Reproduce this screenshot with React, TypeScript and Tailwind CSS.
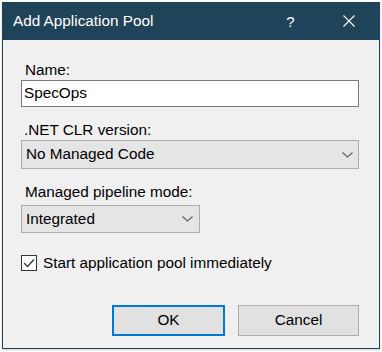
import React from "react";

const Chevron = () => (
  <svg width="11" height="6" viewBox="0 0 11 6" fill="none">
    <path d="M0.5 0.5 L5.5 5 L10.5 0.5" stroke="#606060" strokeWidth="1.1" />
  </svg>
);

const App = () => {
  return (
    <div className="w-[382px] h-[352px] bg-white pt-[2px] pl-[2px] font-['Liberation_Sans',Arial,sans-serif]">
      {/* window */}
      <div className="w-[378px] h-[347px] flex flex-col border-x border-b border-[#1f4359] bg-[#f0f0f0] shadow-[0_1px_2px_rgba(0,0,0,0.2)]">
        {/* title bar */}
        <div className="h-[38px] shrink-0 bg-[#1f4359] flex items-center pl-[10px] pr-[24px] text-white">
          <span className="flex-1 text-[15.3px] leading-none">Add Application Pool</span>
          <span className="text-[15px] leading-none w-[9px] text-center -ml-[2px]">?</span>
          <svg className="ml-[48px]" width="12" height="12" viewBox="0 0 12 12">
            <path d="M0.5 0.5 L11.5 11.5 M11.5 0.5 L0.5 11.5" stroke="#ffffff" strokeWidth="1.1" />
          </svg>
        </div>

        {/* body */}
        <div className="flex flex-col pl-[18px] pr-[20px] text-[15.3px] text-black">
          <label className="mt-[20px] h-[20px] leading-[20px] pl-[4px]">Name:</label>
          <div className="h-[27px] border border-[#7a7a7a] bg-white flex items-center pl-[2px]">
            SpecOps
          </div>

          <label className="mt-[13px] h-[20px] leading-[20px] pl-[3px]">.NET CLR version:</label>
          <div className="h-[29px] border border-[#adadad] bg-[#e5e5e5] flex items-center justify-between pl-[4px] pr-[5px]">
            <span>No Managed Code</span>
            <Chevron />
          </div>

          <label className="mt-[13px] h-[20px] leading-[20px] pl-[4px]">Managed pipeline mode:</label>
          <div className="mt-[3px] w-[179px] h-[28px] border border-[#adadad] bg-[#e5e5e5] flex items-center justify-between pl-[4px] pr-[6px]">
            <span>Integrated</span>
            <Chevron />
          </div>

          <div className="mt-[20px] flex items-center">
            <div className="w-[16px] h-[16px] border border-[#333333] bg-white flex items-center justify-center">
              <svg width="12" height="10" viewBox="0 0 12 10" fill="none">
                <path d="M1 5 L4.5 8.5 L11 1.5" stroke="#333333" strokeWidth="1.3" />
              </svg>
            </div>
            <span className="ml-[6px] leading-[20px]">Start application pool immediately</span>
          </div>

          <div className="mt-[32px] flex justify-end gap-[13px]">
            <button className="w-[113px] h-[31px] border-2 border-[#0078d7] bg-[#e1e1e1] text-[15.3px]">
              OK
            </button>
            <button className="w-[121px] h-[31px] border border-[#adadad] bg-[#e1e1e1] text-[15.3px]">
              Cancel
            </button>
          </div>
        </div>
      </div>
    </div>
  );
};

export default App;
